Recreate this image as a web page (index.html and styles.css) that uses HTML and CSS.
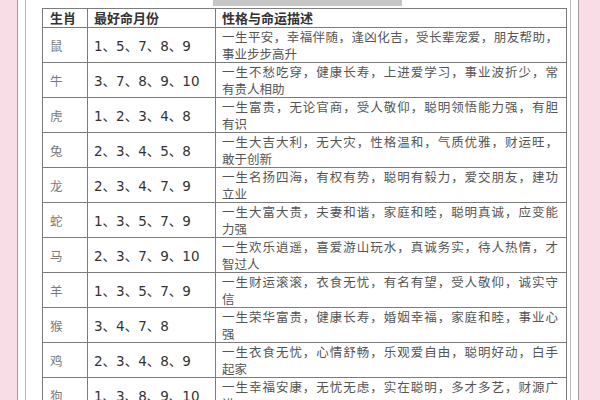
FILE: index.html
```html
<!DOCTYPE html>
<html lang="zh">
<head>
<meta charset="utf-8">
<link rel="stylesheet" href="styles.css">
</head>
<body>
<div class="paper">
  <div class="inner">
    <div class="bar"></div>
    <table class="zodiac">
      <colgroup><col class="c1"><col class="c2"><col class="c3"></colgroup>
      <thead>
        <tr><th>生肖</th><th>最好命月份</th><th>性格与命运描述</th></tr>
      </thead>
      <tbody>
        <tr><td class="an">鼠</td><td class="mo">1、5、7、8、9</td><td class="ds"><div class="l1">一生平安，幸福伴随，逢凶化吉，受长辈宠爱，朋友帮助，</div><div>事业步步高升</div></td></tr>
        <tr><td class="an">牛</td><td class="mo">3、7、8、9、10</td><td class="ds"><div class="l1">一生不愁吃穿，健康长寿，上进爱学习，事业波折少，常</div><div>有贵人相助</div></td></tr>
        <tr><td class="an">虎</td><td class="mo">1、2、3、4、8</td><td class="ds"><div class="l1">一生富贵，无论官商，受人敬仰，聪明领悟能力强，有胆</div><div>有识</div></td></tr>
        <tr><td class="an">兔</td><td class="mo">2、3、4、5、8</td><td class="ds"><div class="l1">一生大吉大利，无大灾，性格温和，气质优雅，财运旺，</div><div>敢于创新</div></td></tr>
        <tr><td class="an">龙</td><td class="mo">2、3、4、7、9</td><td class="ds"><div class="l1">一生名扬四海，有权有势，聪明有毅力，爱交朋友，建功</div><div>立业</div></td></tr>
        <tr><td class="an">蛇</td><td class="mo">1、3、5、7、9</td><td class="ds"><div class="l1">一生大富大贵，夫妻和谐，家庭和睦，聪明真诚，应变能</div><div>力强</div></td></tr>
        <tr><td class="an">马</td><td class="mo">2、3、7、9、10</td><td class="ds"><div class="l1">一生欢乐逍遥，喜爱游山玩水，真诚务实，待人热情，才</div><div>智过人</div></td></tr>
        <tr><td class="an">羊</td><td class="mo">1、3、5、7、9</td><td class="ds"><div class="l1">一生财运滚滚，衣食无忧，有名有望，受人敬仰，诚实守</div><div>信</div></td></tr>
        <tr><td class="an">猴</td><td class="mo">3、4、7、8</td><td class="ds"><div class="l1">一生荣华富贵，健康长寿，婚姻幸福，家庭和睦，事业心</div><div>强</div></td></tr>
        <tr><td class="an">鸡</td><td class="mo">2、3、4、8、9</td><td class="ds"><div class="l1">一生衣食无忧，心情舒畅，乐观爱自由，聪明好动，白手</div><div>起家</div></td></tr>
        <tr><td class="an">狗</td><td class="mo">1、3、8、9、10</td><td class="ds"><div class="l1">一生幸福安康，无忧无虑，实在聪明，多才多艺，财源广</div><div>进</div></td></tr>
      </tbody>
    </table>
  </div>
</div>
</body>
</html>
```
FILE: styles.css
```css
html, body {
  margin: 0;
  padding: 0;
}
body {
  background: #f9dde6;
  height: 400px;
  overflow: hidden;
  font-family: "Noto Sans CJK SC", "Liberation Sans", sans-serif;
}
.paper {
  box-sizing: border-box;
  margin-left: 17px;
  width: 562px;
  height: 400px;
  padding: 0 7px;
  background: #fff;
  border-left: 1px solid #9c9c9c;
  border-right: 1px solid #9c9c9c;
}
.inner {
  height: 100%;
  border-left: 1px solid #b8b8b8;
  border-right: 1px solid #b8b8b8;
}
.bar {
  margin-left: 187px;
  width: 189px;
  height: 6px;
  background: #c6c6c6;
}
.zodiac {
  margin-top: 2px;
  margin-left: 16px;
  width: 524px;
  border-collapse: collapse;
  table-layout: fixed;
  border: 1px solid #7c7c7c;
}
.c1 { width: 45px; }
.c2 { width: 128px; }
.c3 { width: 351px; }
.zodiac th,
.zodiac td {
  border: 1px solid #7c7c7c;
  padding: 0;
  text-align: left;
  vertical-align: middle;
}
.zodiac th {
  height: 18px;
  line-height: 18px;
  font-size: 13px;
  font-weight: bold;
  color: #333;
  padding-left: 7px;
}
.zodiac th:nth-child(2),
.zodiac th:nth-child(3) { padding-left: 6px; }
.zodiac td {
  height: 34px;
}
.an {
  padding-left: 7px !important;
  font-size: 12.5px;
  color: #7a7a7a;
}
.mo {
  padding-left: 6px !important;
  font-family: "DejaVu Sans", "Noto Sans CJK SC", sans-serif;
  font-size: 13.5px;
  color: #333;
  white-space: nowrap;
}
.ds {
  padding: 0 8px 0 6px !important;
  font-size: 12.5px;
  line-height: 17px;
  color: #555;
}
.l1 {
  white-space: nowrap;
  text-align: justify;
  text-align-last: justify;
  text-justify: inter-character;
}
```
